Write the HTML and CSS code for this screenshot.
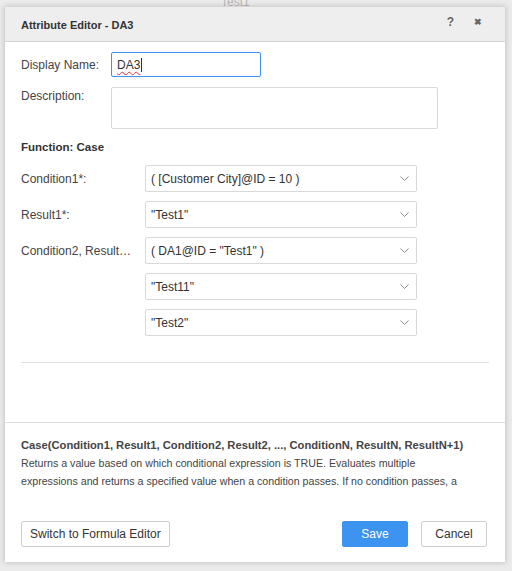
FILE: index.html
```html
<!DOCTYPE html>
<html>
<head>
<meta charset="utf-8">
<link rel="stylesheet" href="styles.css">
</head>
<body>
<div class="backdrop-text">Test1</div>
<div class="dialog">
  <div class="dlg-header">
    <span class="dlg-title">Attribute Editor - DA3</span>
    <div class="dlg-tools">
      <span class="tool">?</span>
      <span class="tool close">&#x2716;</span>
    </div>
  </div>
  <div class="dlg-body">
    <div class="field-row">
      <label class="lbl">Display Name:</label>
      <div class="input focused"><span class="spell">DA3</span><span class="caret"></span></div>
    </div>
    <div class="field-row top">
      <label class="lbl">Description:</label>
      <div class="textarea"></div>
    </div>
    <div class="func-title">Function: Case</div>
    <div class="param-grid">
      <div class="plabel">Condition1*:</div>
      <div class="select"><span>( [Customer City]@ID = 10 )</span><svg class="chev" viewBox="0 0 9 5"><path d="M0.5 0.5 L4.5 4.5 L8.5 0.5" fill="none" stroke="#8a8a8a" stroke-width="1"/></svg></div>
      <div class="plabel">Result1*:</div>
      <div class="select"><span>"Test1"</span><svg class="chev" viewBox="0 0 9 5"><path d="M0.5 0.5 L4.5 4.5 L8.5 0.5" fill="none" stroke="#8a8a8a" stroke-width="1"/></svg></div>
      <div class="plabel">Condition2, Result…</div>
      <div class="select"><span>( DA1@ID = "Test1" )</span><svg class="chev" viewBox="0 0 9 5"><path d="M0.5 0.5 L4.5 4.5 L8.5 0.5" fill="none" stroke="#8a8a8a" stroke-width="1"/></svg></div>
      <div class="plabel"></div>
      <div class="select"><span>"Test11"</span><svg class="chev" viewBox="0 0 9 5"><path d="M0.5 0.5 L4.5 4.5 L8.5 0.5" fill="none" stroke="#8a8a8a" stroke-width="1"/></svg></div>
      <div class="plabel"></div>
      <div class="select"><span>"Test2"</span><svg class="chev" viewBox="0 0 9 5"><path d="M0.5 0.5 L4.5 4.5 L8.5 0.5" fill="none" stroke="#8a8a8a" stroke-width="1"/></svg></div>
    </div>
    <div class="sep"></div>
  </div>
  <div class="help">
    <div class="help-sig">Case(Condition1, Result1, Condition2, Result2, ..., ConditionN, ResultN, ResultN+1)</div>
    <div class="help-desc">Returns a value based on which conditional expression is TRUE. Evaluates multiple expressions and returns a specified value when a condition passes. If no condition passes, a default value is returned.</div>
  </div>
  <div class="dlg-footer">
    <button class="btn">Switch to Formula Editor</button>
    <div class="spacer"></div>
    <button class="btn primary">Save</button>
    <button class="btn">Cancel</button>
  </div>
</div>
</body>
</html>
```

FILE: styles.css
```css
* { box-sizing: border-box; }
html, body {
  margin: 0;
  padding: 0;
  width: 512px;
  height: 571px;
  overflow: hidden;
  background: #ebebeb;
  font-family: "Liberation Sans", Arial, sans-serif;
  font-size: 12px;
  color: #333;
}
body { position: relative; }
.backdrop-text {
  position: absolute;
  left: 221px;
  top: -5px;
  color: #b8b8b8;
  font-size: 12px;
}
.dialog {
  position: relative;
  margin: 7px 0 0 5px;
  width: 500px;
  height: 555px;
  background: #fff;
  box-shadow: 0 0 5px 1px rgba(0,0,0,0.16);
  display: flex;
  flex-direction: column;
}
.dlg-header {
  height: 35px;
  background: #eeeeee;
  border-bottom: 1px solid #d4d4d4;
  display: flex;
  align-items: center;
  padding: 2px 16px 0 16px;
}
.dlg-title {
  font-weight: bold;
  font-size: 11px;
  color: #333;
  flex: 1;
}
.dlg-tools { display: flex; gap: 20px; align-items: center; margin-right: 7px; margin-top: -6px; }
.tool { color: #666; font-weight: bold; font-size: 12px; }
.tool.close { font-size: 9px; }
.dlg-body {
  padding: 10px 16px 0 16px;
  height: 380px;
  display: flex;
  flex-direction: column;
}
.field-row {
  display: flex;
  align-items: center;
  margin-bottom: 10px;
}
.field-row.top { align-items: flex-start; }
.lbl {
  width: 90px;
  color: #444;
}
.field-row.top .lbl { padding-top: 2px; }
.input {
  width: 150px;
  height: 25px;
  border: 1px solid #3d94f0;
  border-radius: 2px;
  padding: 0 5px;
  display: flex;
  align-items: center;
  color: #333;
}
.spell {
  text-decoration: underline wavy #e03030;
  text-decoration-thickness: 1px;
  text-underline-offset: 2px;
}
.caret { width: 1px; height: 14px; background: #333; margin-left: 1px; }
.textarea {
  width: 327px;
  height: 42px;
  border: 1px solid #d9d9d9;
  border-radius: 2px;
}
.func-title {
  font-weight: bold;
  font-size: 11.5px;
  color: #333;
  margin-top: 2px;
  margin-bottom: 12px;
}
.param-grid {
  display: grid;
  grid-template-columns: 124px 272px;
  row-gap: 9px;
  align-items: center;
}
.plabel { color: #444; white-space: nowrap; }
.select {
  height: 27px;
  border: 1px solid #d9d9d9;
  border-radius: 2px;
  display: flex;
  align-items: center;
  justify-content: space-between;
  padding: 0 7px 0 5px;
  color: #333;
}
.chev { width: 9px; height: 5px; }
.sep {
  margin-top: 26px;
  height: 1px;
  background: #e0e0e0;
}
.help {
  border-top: 1px solid #dedede;
  padding: 13px 16px 0 16px;
  height: 68px;
  overflow: hidden;
  line-height: 18px;
  white-space: nowrap;
}
.help-sig { font-weight: bold; font-size: 11.2px; color: #444; }
.help-desc { white-space: normal; width: 453px; font-size: 10.65px; color: #444; }
.dlg-footer {
  display: flex;
  align-items: center;
  padding: 31px 18px 0 16px;
}
.spacer { flex: 1; }
.btn {
  height: 26px;
  border: 1px solid #cfcfcf;
  border-radius: 2px;
  background: #fff;
  font-family: "Liberation Sans", Arial, sans-serif;
  font-size: 12px;
  color: #333;
  padding: 0 8px;
}
.btn.primary {
  background: #3d94f0;
  border-color: #3d94f0;
  color: #fff;
  width: 66px;
  margin-right: 13px;
}
.dlg-footer .btn:last-child { width: 66px; }
```
